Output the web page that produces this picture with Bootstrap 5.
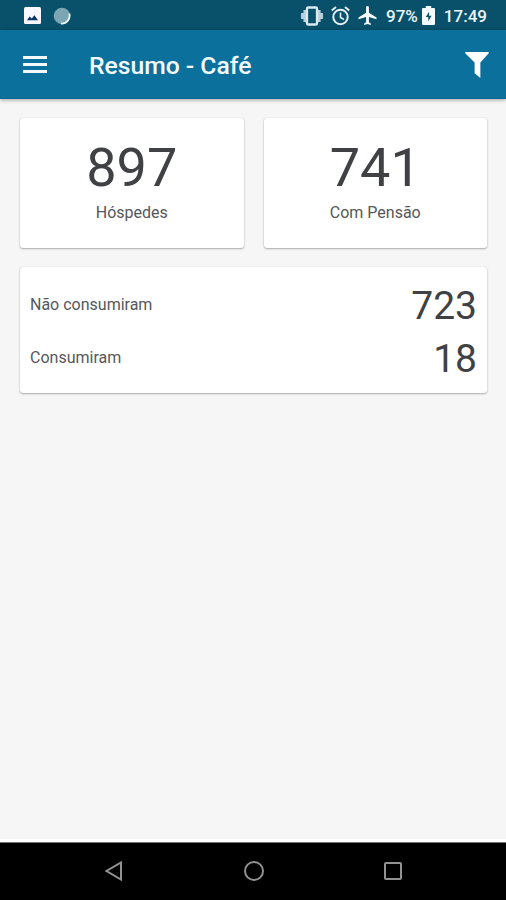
<!DOCTYPE html>
<html lang="pt-BR">
<head>
<meta charset="utf-8">
<meta name="viewport" content="width=device-width, initial-scale=1">
<title>Resumo - Café</title>
<link href="https://cdn.jsdelivr.net/npm/bootstrap@5.3.0/dist/css/bootstrap.min.css" rel="stylesheet">
<style>
body { font-family: Roboto, "Liberation Sans", sans-serif; background: #f6f6f6; color: #3f4144; height: 900px; overflow: hidden; }
svg { display: block; flex: none; }
.status-bar { height: 30px; background: #09506b; color: #eef5f8; padding: 1px 19px 0 24px; font-size: 17px; font-weight: 500; line-height: 30px; }
.notices { gap: 12px; }
.battery-level { margin: 0 4px 0 9px; }
.clock { margin-left: 9px; }
.app-bar { height: 69px; background: #0c709c; color: #f4fafc; border-bottom: 1px solid #0a6690; padding: 0 17px 0 23px; box-shadow: 0 1px 4px rgba(0,0,0,.35); z-index: 1; }
.app-title { font-size: 24.7px; font-weight: 500; line-height: 30px; margin: 4px 0 0 42px; }
.icon-button { border: 0; background: none; padding: 1px 0 0; color: inherit; }
.content-area { padding: 19px 19px 0 20px; }
.panel { border: 0; border-radius: 3px; box-shadow: 0 1px 2px rgba(0,0,0,.3), 0 0 1px rgba(0,0,0,.18); color: inherit; }
.tiles { gap: 20px; }
.tile { height: 130px; padding-top: 18px; flex: 1 1 0; }
.big-number { font-size: 54px; line-height: 64px; }
.caption-text { font-size: 16px; line-height: 22px; color: #55575a; }
.tile .caption-text { margin-top: 2px; }
.summary { margin-top: 19px; height: 126px; padding: 12px 10px 0 10px; }
.summary-row { height: 52.5px; }
.mid-number { font-size: 39px; line-height: 50px; padding-top: 2px; }
.nav-keys { height: 58px; background: #000; border-top: 1px solid #777; box-shadow: 0 -3px 0 #fff; padding: 0 103px 2px 104px; }
</style>
</head>
<body class="d-flex flex-column">
<div class="status-bar d-flex align-items-center justify-content-between">
  <div class="notices d-flex align-items-center">
    <svg width="17" height="17" viewBox="0 0 17 17"><rect width="17" height="17" rx="1.5" fill="#f7f9ff"/><path d="M3 13.2l2.6-3.6 2.2 2 2.6-3.4 3.6 5z" fill="#093765"/></svg>
    <svg width="18" height="18" viewBox="0 0 18 18"><circle cx="9" cy="9" r="8.3" fill="#7ba5b3"/><path d="M16.3 6.5A8 8 0 0 1 8 16.6" fill="none" stroke="#eff8f8" stroke-width="1.8"/></svg>
  </div>
  <div class="d-flex align-items-center">
    <svg width="22" height="20" viewBox="0 0 22 20"><path d="M1.200 7v6M3.700 4v12M18.300 4v12M20.800 7v6" stroke="#b9d0dc" stroke-width="2.600"/><rect x="6" y="1.500" width="10" height="17" rx="1" fill="#09506b" stroke="#dce9f1" stroke-width="2.300"/></svg>
    <svg class="ms-2" width="19" height="20" viewBox="0 0 19 20" fill="none" stroke="#e3f0f5"><circle cx="9.500" cy="11" r="7.200" stroke-width="2"/><path d="M.8 4.500L5 1M18.200 4.500L14 1" stroke-width="2"/><path d="M9.500 6.500v5l3.500 2" stroke-width="1.600"/></svg>
    <svg class="ms-2" width="19" height="19" viewBox="2 2 19 20" fill="#f6fbff"><path d="M21 16v-2l-8-5V3.500a1.500 1.500 0 0 0-3 0V9l-8 5v2l8-2.500V19l-2 1.500V22l3.500-1 3.500 1v-1.500L13 19v-5.500z"/></svg>
    <span class="battery-level">97%</span>
    <svg width="13" height="19" viewBox="0 0 12 20" preserveAspectRatio="none"><path d="M3.500 0h5v2H11q1 0 1 1v16q0 1-1 1H1q-1 0-1-1V3q0-1 1-1h2.500z" fill="#f4faff"/><path d="M6.500 6L3.500 11.500h2.300V16L8.800 10.300H6.500z" fill="#09506b"/></svg>
    <span class="clock">17:49</span>
  </div>
</div>
<header class="app-bar d-flex align-items-center">
  <button class="icon-button" type="button" aria-label="Menu">
    <svg width="24" height="18" viewBox="0 0 24 18" fill="currentColor"><path d="M0 0h24v3H0zM0 7h24v3H0zM0 14h24v3H0z"/></svg>
  </button>
  <h1 class="app-title">Resumo - Café</h1>
  <button class="icon-button ms-auto" type="button" aria-label="Filtrar">
    <svg width="24" height="26" viewBox="0 0 25 27"><path d="M1 0h23q1.500 0 .5 1.500L16 11v16l-6-5V11L.5 1.500Q-.5 0 1 0z" fill="#fff"/></svg>
  </button>
</header>
<main class="content-area flex-grow-1">
  <div class="tiles d-flex">
    <section class="card panel tile text-center">
      <div class="big-number">897</div>
      <div class="caption-text">Hóspedes</div>
    </section>
    <section class="card panel tile text-center">
      <div class="big-number">741</div>
      <div class="caption-text">Com Pensão</div>
    </section>
  </div>
  <section class="card panel summary">
    <div class="summary-row d-flex align-items-center justify-content-between">
      <span class="caption-text">Não consumiram</span><span class="mid-number">723</span>
    </div>
    <div class="summary-row d-flex align-items-center justify-content-between">
      <span class="caption-text">Consumiram</span><span class="mid-number">18</span>
    </div>
  </section>
</main>
<nav class="nav-keys d-flex align-items-center justify-content-between">
  <svg width="20" height="22" viewBox="0 0 20 22"><path d="M17 2.500v17L2.500 11z" fill="none" stroke="#929292" stroke-width="2"/></svg>
  <svg width="22" height="22" viewBox="0 0 22 22"><circle cx="11" cy="11" r="9" fill="none" stroke="#929292" stroke-width="2"/></svg>
  <svg width="20" height="20" viewBox="0 0 20 20"><rect x="2" y="2" width="16" height="16" rx="1" fill="none" stroke="#929292" stroke-width="2"/></svg>
</nav>
<script src="https://cdn.jsdelivr.net/npm/bootstrap@5.3.0/dist/js/bootstrap.bundle.min.js"></script>
</body>
</html>
